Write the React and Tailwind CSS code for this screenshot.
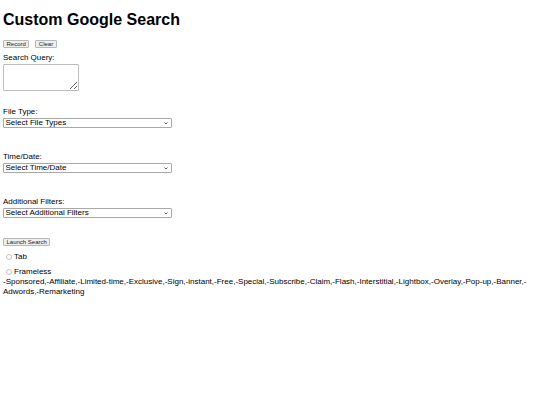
import { useState } from "react";

const filters =
  "-Sponsored,-Affiliate,-Limited-time,-Exclusive,-Sign,-instant,-Free,-Special,-Subscribe,-Claim,-Flash,-Interstitial,-Lightbox,-Overlay,-Pop-up,-Banner,-Adwords,-Remarketing";

function SmallButton({ children, onClick }) {
  return (
    <button
      type="button"
      onClick={onClick}
      className="h-[8px] px-[2.5px] bg-[#efefef] border border-[#b8b8b8] rounded-[1px] text-[6px] leading-none text-[#222] flex items-center"
    >
      {children}
    </button>
  );
}

function Dropdown({ label, placeholder, options, value, onChange, className }) {
  return (
    <div className={className}>
      <div className="leading-[10px]">{label}</div>
      <div className="relative mt-[1px] w-[169px]">
        <select
          value={value}
          onChange={(e) => onChange(e.target.value)}
          className="appearance-none block w-full h-[10px] border border-[#a9a9a9] rounded-[1px] bg-white pl-[1.5px] text-[8px] leading-none text-black outline-none"
        >
          <option value="">{placeholder}</option>
          {options.map((o) => (
            <option key={o} value={o}>
              {o}
            </option>
          ))}
        </select>
        <svg
          className="absolute right-[4px] top-[3.5px] pointer-events-none"
          width="4"
          height="3"
          viewBox="0 0 8 6"
        >
          <path d="M1 1l3 3 3-3" stroke="#333" strokeWidth="1.6" fill="none" />
        </svg>
      </div>
    </div>
  );
}

function Radio({ name, label, checked, onChange }) {
  return (
    <label className="flex items-center h-[10px] leading-[10px]">
      <input
        type="radio"
        name={name}
        checked={checked}
        onChange={onChange}
        className="appearance-none w-[6px] h-[6px] ml-[2.5px] mr-[2.5px] rounded-full border border-[#c4c4c4] bg-white checked:bg-[#1a73e8]"
      />
      <span>{label}</span>
    </label>
  );
}

export default function App() {
  const [query, setQuery] = useState("");
  const [fileType, setFileType] = useState("");
  const [timeDate, setTimeDate] = useState("");
  const [extra, setExtra] = useState("");
  const [mode, setMode] = useState("");

  return (
    <div className="min-h-[405px] bg-white pl-[3px] pr-[4px] text-[8px] text-black font-['Liberation_Sans',Arial,sans-serif]">
      <h1 className="pt-[11px] text-[16px] leading-[18px] font-bold">Custom Google Search</h1>

      <div className="mt-[11px] flex gap-[6px]">
        <SmallButton>Record</SmallButton>
        <SmallButton onClick={() => setQuery("")}>Clear</SmallButton>
      </div>

      <div className="mt-[5px] leading-[10px]">Search Query:</div>
      <textarea
        value={query}
        onChange={(e) => setQuery(e.target.value)}
        className="block mt-[1px] w-[76px] h-[27px] border border-[#bdbdbd] rounded-[1px] text-[8px] p-[1px] outline-none"
      />

      <Dropdown
        className="mt-[16px]"
        label="File Type:"
        placeholder="Select File Types"
        options={["PDF", "DOC", "XLS", "PPT"]}
        value={fileType}
        onChange={setFileType}
      />
      <Dropdown
        className="mt-[24px]"
        label="Time/Date:"
        placeholder="Select Time/Date"
        options={["Past 24 hours", "Past week", "Past month", "Past year"]}
        value={timeDate}
        onChange={setTimeDate}
      />
      <Dropdown
        className="mt-[24px]"
        label="Additional Filters:"
        placeholder="Select Additional Filters"
        options={["Exclude ads", "Exclude popups"]}
        value={extra}
        onChange={setExtra}
      />

      <div className="mt-[20px] flex">
        <SmallButton>Launch Search</SmallButton>
      </div>

      <div className="mt-[6px]">
        <Radio name="mode" label="Tab" checked={mode === "tab"} onChange={() => setMode("tab")} />
      </div>
      <div className="mt-[5px]">
        <Radio
          name="mode"
          label="Frameless"
          checked={mode === "frameless"}
          onChange={() => setMode("frameless")}
        />
      </div>
      <p className="leading-[10px]">{filters}</p>
    </div>
  );
}
